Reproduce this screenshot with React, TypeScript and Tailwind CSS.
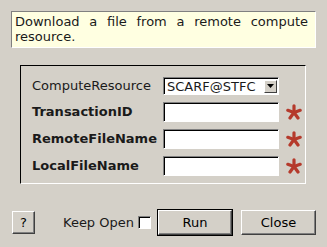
import React from "react";

const font = { fontFamily: '"DejaVu Sans", "Liberation Sans", sans-serif' };

function Star() {
  return (
    <svg width="16" height="16" viewBox="0 0 16 16" className="shrink-0">
      <g stroke="#b53a2c" strokeWidth="3.2" strokeLinecap="round">
        <line x1="8" y1="8.5" x2="8" y2="1.8" />
        <line x1="8" y1="8.5" x2="1.8" y2="6.3" />
        <line x1="8" y1="8.5" x2="14.2" y2="6.3" />
        <line x1="8" y1="8.5" x2="4" y2="14" />
        <line x1="8" y1="8.5" x2="12" y2="14" />
      </g>
    </svg>
  );
}

const inputCls =
  "w-[116px] h-[20px] bg-white border border-t-[#808080] border-l-[#808080] border-r-white border-b-white shadow-[inset_1px_1px_0_#000]";

const btnCls =
  "flex items-center justify-center bg-[#d4d0c8] border border-t-white border-l-white border-r-[#404040] border-b-[#404040] shadow-[inset_-1px_-1px_0_#808080] text-[13px] text-black";

export default function App() {
  return (
    <div
      className="w-[327px] h-[247px] bg-[#d4d0c8] flex flex-col text-[13px] text-[#1a1a1a] overflow-hidden"
      style={font}
    >
      <div className="mx-[11px] mt-[11px] h-[37px] bg-[#ffffe1] border border-t-[#808080] border-l-[#808080] border-r-white border-b-white pl-[3px] pr-[7px] pt-[2px] leading-[15px] text-justify">
        Download a file from a remote compute resource.
      </div>

      <div className="ml-[20px] mt-[17px] w-[286px] h-[119px] border border-t-[#000] border-l-[#000] border-r-white border-b-white pt-[11px] pl-[11px]">
        <div className="grid grid-cols-[131px_116px_auto] gap-y-[7px] items-center">
          <div className="h-[18px] flex items-center">ComputeResource</div>
          <div className="h-[18px] w-[116px] bg-white border border-t-[#808080] border-l-[#808080] border-r-white border-b-white shadow-[inset_1px_1px_0_#000] flex items-center justify-between pl-[3px] pr-[1px]">
            <span className="leading-none">SCARF@STFC</span>
            <span className="w-[13px] h-[13px] bg-[#d4d0c8] border border-t-white border-l-white border-r-[#404040] border-b-[#404040] flex items-center justify-center">
              <svg width="7" height="4" viewBox="0 0 7 4">
                <polygon points="0,0 7,0 3.5,4" fill="#000" />
              </svg>
            </span>
          </div>
          <div />

          <div className="font-bold h-[20px] flex items-center">TransactionID</div>
          <div className={inputCls} />
          <div className="pl-[7px] flex items-center"><Star /></div>

          <div className="font-bold h-[20px] flex items-center">RemoteFileName</div>
          <div className={inputCls} />
          <div className="pl-[7px] flex items-center"><Star /></div>

          <div className="font-bold h-[20px] flex items-center">LocalFileName</div>
          <div className={inputCls} />
          <div className="pl-[7px] flex items-center"><Star /></div>
        </div>
      </div>

      <div className="flex items-center mt-[25px] ml-[12px]">
        <div className={btnCls + " w-[23px] h-[23px]"}>?</div>
        <span className="ml-[28px]">Keep Open</span>
        <span className="ml-[4px] w-[13px] h-[13px] bg-white border border-t-[#808080] border-l-[#808080] border-r-white border-b-white shadow-[inset_1px_1px_0_#000]" />
        <div className="ml-[6px] w-[76px] h-[27px] border border-black">
          <div className={btnCls + " w-full h-full"}>Run</div>
        </div>
        <div className={btnCls + " ml-[8px] w-[75px] h-[25px]"}>Close</div>
      </div>
    </div>
  );
}
